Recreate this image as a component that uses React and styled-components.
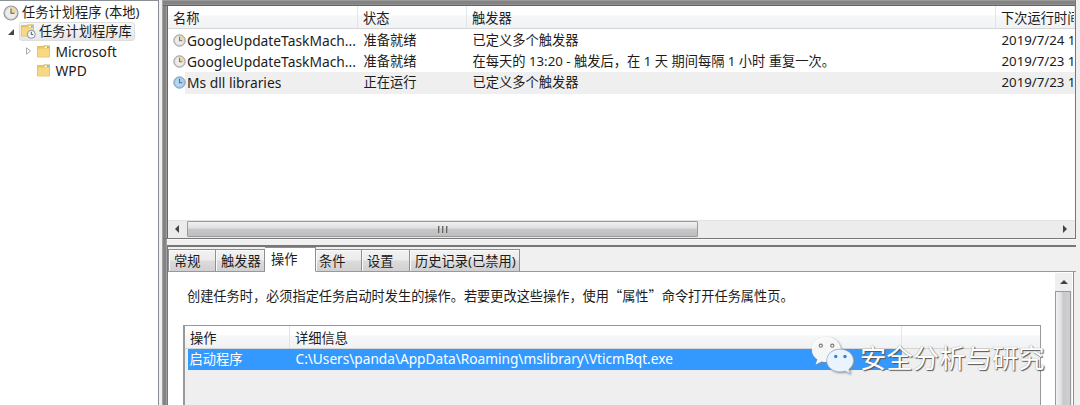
import React from "react";
import styled, { createGlobalStyle } from "styled-components";

const Global = createGlobalStyle`
  body { margin: 0; background: #f0f0f0; }
  * { box-sizing: border-box; }
`;

const Window = styled.div`
  position: relative;
  display: flex;
  width: 1080px;
  height: 405px;
  overflow: hidden;
  background: #f0f0f0;
  color: #1c1c1c;
  font: 13.25px/21px "Noto Sans", "Noto Sans CJK SC", sans-serif;
  white-space: pre;
`;

const TreePane = styled.nav`
  width: 159px;
  height: 405px;
  flex: none;
  background: #fff;
  border-top: 1px solid #8b8f96;
  border-right: 1px solid #868b94;
  padding-top: 2px;
`;

const TreeItem = styled.div`
  display: flex;
  align-items: center;
  height: 19.3px;
  padding-left: ${(p) => p.$indent}px;
`;

const TreeLabel = styled.span`
  margin-left: ${(p) => p.$gap || 5}px;
  font-size: ${(p) => (p.$latin ? 13.8 : 13.25)}px;
  line-height: 19px;
`;

const Selected = styled.div`
  display: flex;
  align-items: center;
  width: 116px;
  height: 19px;
  margin-left: 4px;
  padding-left: 1px;
  border: 1px solid #dedede;
  border-radius: 3px;
  background: linear-gradient(#f8f8f8, #e6e6e6);
`;

const Arrow = styled.svg`
  flex: none;
  display: block;
`;

const Content = styled.main`
  display: flex;
  flex-direction: column;
  width: 914px;
  height: 405px;
  margin-left: 3px;
  flex: none;
  border-left: 1px solid #a2a2a2;
  background: linear-gradient(90deg, #848484 0 3px, #a0a0a0 3px 4px, #666 4px 5px, transparent 5px);
  padding-left: 5px;
`;

const TopPane = styled.section`
  display: flex;
  flex-direction: column;
  flex: none;
  height: 239px;
  margin-left: -5px;
  padding: 6px 0 0 5px;
  border-right: 1px solid #777;
  border-bottom: 1px solid #777;
  background:
    linear-gradient(#9a9a9a 0 1px, #848484 1px 4px, #8e8e8e 4px 5px, #666 5px) 0 0 / 100% 6px no-repeat,
    linear-gradient(90deg, #848484 0 3px, #a0a0a0 3px 4px, #666 4px 5px, #fff 5px);
`;

const TableHead = styled.div`
  display: grid;
  grid-template-columns: ${(p) => p.$cols};
  height: ${(p) => p.$h}px;
  flex: none;
  overflow: hidden;
  background: linear-gradient(#fff 0 40%, #f6f7f9 45%, #f1f2f4);
  border-bottom: 1px solid #d5d5d5;
`;

const HeadCell = styled.div`
  padding-left: 5px;
  line-height: 24px;
  border-right: 1px solid #e2e4e7;
  overflow: hidden;
`;

const Row = styled.div`
  display: grid;
  grid-template-columns: 191px 109px 529px 1fr;
  height: 21.2px;
  overflow: hidden;
  background: ${(p) => (p.$active ? "linear-gradient(90deg, #fff 17px, #efefef 17px)" : "#fff")};
`;

const Cell = styled.div`
  display: flex;
  align-items: center;
  overflow: hidden;
  padding-left: 4.5px;
`;

const Rows = styled.div`
  padding-top: 1px;
  flex: 1;
  overflow: hidden;
`;

const HScroll = styled.div`
  display: flex;
  height: 18px;
  flex: none;
  background: #ececec;
  border-top: 1px solid #e2e2e2;
`;

const ScrollButton = styled.div`
  display: flex;
  align-items: center;
  justify-content: center;
  width: ${(p) => p.$w}px;
  height: ${(p) => p.$h}px;
`;

const HThumb = styled.div`
  display: flex;
  align-items: center;
  justify-content: center;
  gap: 2px;
  width: 511px;
  height: 16px;
  border: 1px solid #9a9a9a;
  border-radius: 1px;
  background: linear-gradient(#f1f1f1, #dededf 45%, #c8c8ca 50%, #bebec1);
`;

const Grip = styled.i`
  width: 2px;
  height: 7px;
  background: linear-gradient(90deg, #666 50%, #aaa 50%);
`;

const Spacer = styled.div`
  flex: 1;
`;

const BottomPane = styled.section`
  display: flex;
  flex-direction: column;
  flex: 1;
  min-height: 0;
  margin-top: 6px;
  margin-left: -1px;
  border-top: 2px solid #777;
  border-left: 1px solid #777;
  background: #f0f0f0;
  box-shadow: 0 -5px #f0f0f0, 0 -6px #fafafa;
`;

const Tabs = styled.div`
  display: flex;
  align-items: flex-end;
  height: 25px;
  flex: none;
  box-shadow: inset 0 -1px #97999d;
`;

const Tab = styled.div`
  width: ${(p) => p.$w}px;
  height: ${(p) => (p.$active ? 25 : 23)}px;
  padding-left: ${(p) => p.$pad || 5}px;
  line-height: 22px;
  border: 1px solid #8d8f94;
  border-left-width: ${(p) => (p.$first ? 1 : 0)}px;
  border-bottom-color: ${(p) => (p.$active ? "#fff" : "#97999d")};
  background: ${(p) => (p.$active ? "#fff" : "linear-gradient(#f2f2f2, #ebebeb 48%, #dcdcdc 52%, #d0d0d0)")};
  box-shadow: ${(p) => (p.$active ? "none" : "inset 1px 1px #fafafa")};
`;

const Page = styled.div`
  display: flex;
  flex: 1;
  min-height: 0;
  overflow: hidden;
  width: 906px;
  background: #fff;
  border-right: 1px solid #8d8f94;
`;

const PageBody = styled.div`
  width: 887px;
  padding: 13px 0 0 15px;
`;

const Hint = styled.p`
  margin: 0 0 18px 4px;
  font-family: "Noto Sans CJK SC", sans-serif;
  font-size: 13.2px;
  line-height: 22px;
`;

const ActionTable = styled.div`
  width: 858px;
  height: 90px;
  border: 1px solid #999;
  border-left-width: 2px;
  background: #efefef;
`;

const ActionRow = styled.div`
  display: grid;
  grid-template-columns: 106px 1fr;
  width: 714px;
  height: 21px;
  margin-left: 3px;
  padding-left: 1.5px;
  background: #3399ff;
  color: #fff;
  line-height: 20px;
`;

const CommandPath = styled.span`
  font-size: 13.66px;
`;

const VScroll = styled.div`
  width: 17px;
  background: #efefef;
  margin-top: 1px;
`;

const VThumb = styled.div`
  width: 16px;
  height: 120px;
  border: 1px solid #9a9a9a;
  background: linear-gradient(90deg, #f1f1f1, #dededf 40%, #c9c9cd 48%, #cfcfd2);
`;

const Watermark = styled.div`
  position: absolute;
  left: 811px;
  top: 336px;
  display: flex;
  color: #fff;
`;

const BubbleArt = styled.svg`
  flex: none;
  display: block;
  filter: drop-shadow(1px 1px 1px #888);
`;

const WatermarkText = styled.span`
  margin: 1px 0 0 5px;
  font: 26.4px/40px "Noto Sans CJK SC", sans-serif;
  text-shadow: 1px 1px 1px #555, 0 0 1px #888;
`;

function Clock({ size, blue }) {
  return (
    <Arrow width={size} height={size} viewBox="0 0 16 16">
      <circle cx="8" cy="8" r="7" fill={blue ? "#9fc5e8" : "#d9d9d9"} stroke={blue ? "#7c9fc3" : "#999"} strokeWidth="1.2" />
      <circle cx="8" cy="8" r="5.2" fill={blue ? "#b5d5f0" : "#ededea"} />
      <path d="M8 8V2.8A5.2 5.2 0 0 1 13.2 8Z" fill={blue ? "#a6cdec" : "#f2d795"} />
      <path d="M8 3.5V8.3H11.5" fill="none" stroke={blue ? "#4a7199" : "#777"} strokeWidth="1.3" />
    </Arrow>
  );
}

function Folder({ clock }) {
  return (
    <Arrow width={clock ? 15 : 13} height={clock ? 15 : 13} viewBox={clock ? "0 0 15 15" : "0 0 13 13"}>
      <path d="M.5 1.5H6L7 .8H12.5V12H.5Z" fill="#e9c667" stroke="#d5ad4c" strokeWidth=".7" />
      <path d="M7.7 1.7H11.8V3H7.7Z" fill="#fff" />
      <path d="M10 1.7H11.8V3H10Z" fill="#69a6d8" />
      <path d="M.7 3.6H12.3V11.8H.7Z" fill="#f6d980" />
      {clock && (
        <g>
          <circle cx="10.3" cy="10.3" r="4" fill="#f5f8fa" stroke="#8a929b" />
          <path d="M10.3 7.8V10.5H12.2" fill="none" stroke="#555" />
        </g>
      )}
    </Arrow>
  );
}

function Triangle({ d, w = 8, h = 8, outline }) {
  return (
    <Arrow width={w} height={h} viewBox={`0 0 ${w} ${h}`}>
      <path d={d} fill={outline ? "#fff" : "#444"} stroke={outline ? "#aaa" : "none"} />
    </Arrow>
  );
}

function Bubbles() {
  return (
    <BubbleArt width="44" height="40" viewBox="0 0 44 40">
      <path d="M15.5 1C7 1 .8 6.6.8 13.7c0 4 2 7.4 5.5 9.8L4.6 28.6l6-3.2c1.8.5 3.2.7 5 .7C15.2 18 21.2 12.5 30 12.8 28.6 5.8 22.8 1 15.5 1Z" fill="#fff" fillOpacity=".92" />
      <path d="M29 13.2c7.6 0 13.4 5.1 13.4 11.4 0 3.5-1.8 6.5-4.7 8.7l1.4 4.2-4.9-2.6c-1.6.5-3.3.8-5.2.8-7.5 0-13.2-4.9-13.2-11.2S21.5 13.2 29 13.2Z" fill="#eaf4ff" stroke="#9ab4cd" strokeWidth=".5" />
      <g fill="#f5f8fa" stroke="#777" strokeWidth="1.1">
        <circle cx="9.8" cy="9.7" r="1.6" />
        <circle cx="21.3" cy="9.7" r="1.6" />
      </g>
      <g fill="#3484ce">
        <circle cx="24.7" cy="20.5" r="1.7" />
        <circle cx="34" cy="20.5" r="1.7" />
      </g>
    </BubbleArt>
  );
}

const tasks = [
  { name: "GoogleUpdateTaskMach...", state: "准备就绪", trigger: "已定义多个触发器", next: "2019/7/24 1" },
  { name: "GoogleUpdateTaskMach...", state: "准备就绪", trigger: "在每天的 13:20 - 触发后，在 1 天 期间每隔 1 小时 重复一次。", next: "2019/7/23 1" },
  { name: "Ms dll libraries", state: "正在运行", trigger: "已定义多个触发器", next: "2019/7/23 1", active: true },
];

export default function App() {
  return (
    <Window>
      <Global />
      <TreePane>
        <TreeItem $indent={3}>
          <Clock size={16} />
          <TreeLabel $gap={3}>任务计划程序 (本地)</TreeLabel>
        </TreeItem>
        <TreeItem $indent={7}>
          <Triangle d="M7 1V7H1Z" />
          <Selected>
            <Folder clock />
            <TreeLabel $gap={3}>任务计划程序库</TreeLabel>
          </Selected>
        </TreeItem>
        <TreeItem $indent={25}>
          <Triangle d="M1.5 .8V7.2L5.5 4Z" outline />
          <TreeLabel $gap={4}><Folder /></TreeLabel>
          <TreeLabel $gap={5.5} $latin>Microsoft</TreeLabel>
        </TreeItem>
        <TreeItem $indent={37}>
          <Folder />
          <TreeLabel $gap={5.5} $latin>WPD</TreeLabel>
        </TreeItem>
      </TreePane>
      <Content>
        <TopPane>
          <TableHead $cols="190px 109px 529px 1fr" $h={23}>
            <HeadCell>名称</HeadCell>
            <HeadCell>状态</HeadCell>
            <HeadCell>触发器</HeadCell>
            <HeadCell>下次运行时间</HeadCell>
          </TableHead>
          <Rows>
            {tasks.map((t, i) => (
              <Row key={i} $active={t.active}>
                <Cell>
                  <Clock size={13} blue={t.active} />
                  <TreeLabel $gap={1.5} $latin>{t.name}</TreeLabel>
                </Cell>
                <Cell>{t.state}</Cell>
                <Cell>{t.trigger}</Cell>
                <Cell>{t.next}</Cell>
              </Row>
            ))}
          </Rows>
          <HScroll>
            <ScrollButton $w={19} $h={16}><Triangle d="M5 0V8L1 4Z" /></ScrollButton>
            <HThumb><Grip /><Grip /><Grip /></HThumb>
            <Spacer />
            <ScrollButton $w={19} $h={16}><Triangle d="M1 0V8L5 4Z" /></ScrollButton>
          </HScroll>
        </TopPane>
        <BottomPane>
          <Tabs>
            <Tab $w={48} $first>常规</Tab>
            <Tab $w={49}>触发器</Tab>
            <Tab $w={51} $pad={6} $active>操作</Tab>
            <Tab $w={46} $pad={3}>条件</Tab>
            <Tab $w={48}>设置</Tab>
            <Tab $w={110}>历史记录(已禁用)</Tab>
          </Tabs>
          <Page>
            <PageBody>
              <Hint>创建任务时，必须指定任务启动时发生的操作。若要更改这些操作，使用“属性”命令打开任务属性页。</Hint>
              <ActionTable>
                <TableHead $cols="105px 612px 1fr" $h={23}>
                  <HeadCell>操作</HeadCell>
                  <HeadCell>详细信息</HeadCell>
                  <div />
                </TableHead>
                <ActionRow>
                  <span>启动程序</span>
                  <CommandPath>C:\Users\panda\AppData\Roaming\mslibrary\VticmBqt.exe</CommandPath>
                </ActionRow>
              </ActionTable>
            </PageBody>
            <VScroll>
              <ScrollButton $w={17} $h={18}><Triangle d="M0 6H8L4 2Z" /></ScrollButton>
              <VThumb />
            </VScroll>
          </Page>
        </BottomPane>
      </Content>
      <Watermark>
        <Bubbles />
        <WatermarkText>安全分析与研究</WatermarkText>
      </Watermark>
    </Window>
  );
}
